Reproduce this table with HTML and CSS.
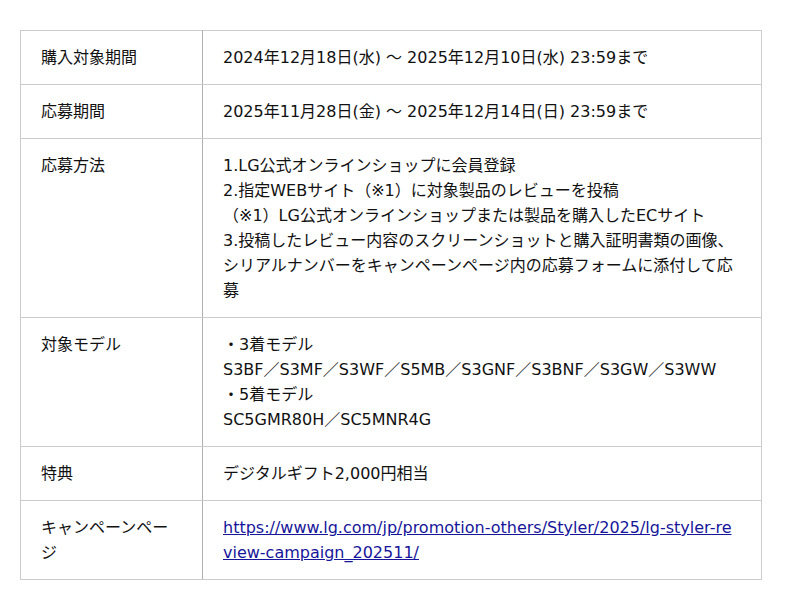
FILE: index.html
```html
<!DOCTYPE html>
<html lang="ja">
<head>
<meta charset="utf-8">
<link rel="stylesheet" href="styles.css">
</head>
<body>
<table class="info">
  <tr><th>購入対象期間</th><td>2024年12月18日(水) 〜 2025年12月10日(水) 23:59まで</td></tr>
  <tr><th>応募期間</th><td>2025年11月28日(金) 〜 2025年12月14日(日) 23:59まで</td></tr>
  <tr><th>応募方法</th><td>1.LG公式オンラインショップに会員登録<br>2.指定WEBサイト（※1）に対象製品のレビューを投稿<br>（※1）LG公式オンラインショップまたは製品を購入したECサイト<br>3.投稿したレビュー内容のスクリーンショットと購入証明書類の画像、シリアルナンバーをキャンペーンページ内の応募フォームに添付して応募</td></tr>
  <tr><th>対象モデル</th><td>・3着モデル<br>S3BF／S3MF／S3WF／S5MB／S3GNF／S3BNF／S3GW／S3WW<br>・5着モデル<br>SC5GMR80H／SC5MNR4G</td></tr>
  <tr><th>特典</th><td>デジタルギフト2,000円相当</td></tr>
  <tr><th>キャンペーンページ</th><td><a class="link" href="#">https://www.lg.com/jp/promotion-others/Styler/2025/lg-styler-review-campaign_202511/</a></td></tr>
</table>
</body>
</html>
```
FILE: styles.css
```css
html, body {
  margin: 0;
  padding: 0;
  background: #fff;
}
body {
  padding: 30px 0 0 20px;
  font-family: "DejaVu Sans", "Noto Sans CJK JP", sans-serif;
  font-size: 16px;
  line-height: 25px;
  color: #111;
}
.info {
  width: 742px;
  border-collapse: collapse;
  table-layout: fixed;
}
.info th, .info td {
  border: 1px solid #ccc;
  padding: 14px 24px 14px 20px;
  text-align: left;
  vertical-align: top;
  font-weight: normal;
  word-break: break-all;
}
.info th {
  width: 137px;
  border-right-color: #b0b0b0;
}
.link {
  color: #16169a;
  text-decoration: underline;
}
```
